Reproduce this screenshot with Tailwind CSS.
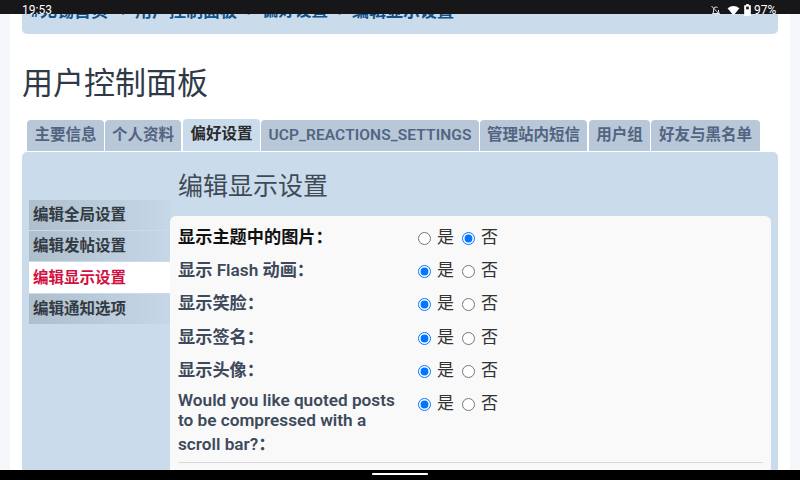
<!DOCTYPE html>
<html lang="zh-CN">
<head>
<meta charset="utf-8">
<script src="https://cdn.jsdelivr.net/npm/@tailwindcss/browser@4"></script>
</head>
<body class="w-[800px] h-[480px] overflow-hidden relative bg-[#f5f7fa] font-['Roboto','Noto_Sans_CJK_SC',sans-serif]">
  <div class="absolute top-0 left-0 right-0 h-[14px] bg-[#17171a] z-10 text-white text-[12px] leading-[14px]">
    <span class="absolute left-[22px] top-[3px]">19:53</span>
    <div class="absolute left-[710px] top-[3px] flex items-center">
      <svg width="12" height="13" viewBox="0 0 24 24" fill="none" stroke="#e5e5e5" stroke-width="2"><path d="M5 18 L7 15 V10 a5 5 0 0 1 8-4 M17 11 V15 L19 18 H5 M10 21 h4 M3 3 L21 22"/></svg>
      <svg width="13" height="11" viewBox="0 0 24 20" fill="#fff" class="ml-[5px]"><path d="M1 6 Q12 -3 23 6 L12 19 Z"/></svg>
      <svg width="7" height="12" viewBox="0 0 10 18" class="ml-[4px]"><path fill="#fff" d="M3 0h4v2h3v16H0V2h3z"/><path fill="#17171a" d="M3 4h4v4H3z"/></svg>
      <span class="ml-[3px]">97%</span>
    </div>
  </div>

  <div class="w-[780px] h-[480px] ml-[10px] bg-white px-[12px]">
    <div class="h-[34px] rounded-b-[5px] bg-[#cadcec] pl-[8px] pt-[1px] flex text-[#105289] text-[17px] font-bold leading-[20px] whitespace-nowrap">
      <span class="w-[82px]">#无锡首页</span><span class="w-[23px] text-center text-[#5b7a99] text-[14px]">›</span><span class="w-[101px]">用户控制面板</span><span class="w-[26px] text-center text-[#5b7a99] text-[14px]">›</span><span class="w-[66px] text-[16.5px]">偏好设置</span><span class="w-[24px] text-center text-[#5b7a99] text-[14px]">›</span><span>编辑显示设置</span>
    </div>

    <h1 class="mt-[32px] text-[31px] leading-[36px] font-normal text-[#303a46]">用户控制面板</h1>

    <div class="mt-[18px] h-[32px] pl-[5px] flex gap-[1px] text-[15.5px] font-semibold text-[#536482] whitespace-nowrap">
      <span class="w-[77px] h-[31px] text-center leading-[31px] rounded-t-[4px] bg-[#b8c8d8]">主要信息</span>
      <span class="w-[76px] h-[31px] text-center leading-[31px] rounded-t-[4px] bg-[#b8c8d8]">个人资料</span>
      <span class="ml-[1px] w-[77px] h-[32px] -mt-[1px] text-center leading-[31px] rounded-t-[4px] bg-[#cadcec] text-[#2a2a2a]">偏好设置</span>
      <span class="w-[218px] h-[31px] text-center leading-[31px] tracking-[0.1px] rounded-t-[4px] bg-[#b8c8d8]">UCP_REACTIONS_SETTINGS</span>
      <span class="w-[107px] h-[31px] text-center leading-[31px] rounded-t-[4px] bg-[#b8c8d8]">管理站内短信</span>
      <span class="ml-[1px] w-[61px] h-[31px] text-center leading-[31px] rounded-t-[4px] bg-[#b8c8d8]">用户组</span>
      <span class="w-[109px] h-[31px] text-center leading-[31px] rounded-t-[4px] bg-[#b8c8d8]">好友与黑名单</span>
    </div>

    <div class="h-[330px] rounded-t-[5px] bg-[#cadcec] flex pl-[7px] pr-[7px] overflow-hidden">
      <div class="w-[141px] pt-[48px] flex flex-col text-[15.5px] font-semibold text-[#333a42]">
        <span class="h-[30px] mb-[1px] pl-[4px] leading-[31px] bg-gradient-to-r from-[#aebecd] to-[#c6d7e7]">编辑全局设置</span>
        <span class="h-[30px] mb-[1px] pl-[4px] leading-[31px] bg-gradient-to-r from-[#aebecd] to-[#c6d7e7]">编辑发帖设置</span>
        <span class="h-[31px] mb-[1px] pl-[4px] leading-[32px] bg-white text-[#d31141]">编辑显示设置</span>
        <span class="h-[30px] pl-[4px] leading-[30px] bg-gradient-to-r from-[#aebecd] to-[#c6d7e7]">编辑通知选项</span>
      </div>
      <div class="flex-1 flex flex-col">
        <h2 class="pl-[8px] pt-[18px] h-[64px] text-[25px] leading-[34px] font-normal text-[#3f4a56]">编辑显示设置</h2>
        <div class="flex-1 rounded-t-[6px] bg-[#f9f9f9] pt-[10.5px] px-[8px] text-[17.2px] leading-[20px] font-semibold text-[#3e4a5c]">
          <div class="h-[33.4px] flex text-[#111]"><span class="w-[239.5px]">显示主题中的图片：</span><div class="font-normal text-[#333] flex items-start">
            <input type="radio" name="r1" class="mt-[5px]"><span class="ml-[6.5px] w-[17px] text-[17px]">是</span>
            <input type="radio" name="r1" checked class="ml-[7.5px] mt-[5px]"><span class="ml-[6.5px] text-[17px]">否</span></div></div>
          <div class="h-[33.4px] flex"><span class="w-[239.5px]">显示 Flash 动画：</span><div class="font-normal text-[#333] flex items-start">
            <input type="radio" name="r2" checked class="mt-[5px]"><span class="ml-[6.5px] w-[17px] text-[17px]">是</span>
            <input type="radio" name="r2" class="ml-[7.5px] mt-[5px]"><span class="ml-[6.5px] text-[17px]">否</span></div></div>
          <div class="h-[33.4px] flex"><span class="w-[239.5px]">显示笑脸：</span><div class="font-normal text-[#333] flex items-start">
            <input type="radio" name="r3" checked class="mt-[5px]"><span class="ml-[6.5px] w-[17px] text-[17px]">是</span>
            <input type="radio" name="r3" class="ml-[7.5px] mt-[5px]"><span class="ml-[6.5px] text-[17px]">否</span></div></div>
          <div class="h-[33.4px] flex"><span class="w-[239.5px]">显示签名：</span><div class="font-normal text-[#333] flex items-start">
            <input type="radio" name="r4" checked class="mt-[5px]"><span class="ml-[6.5px] w-[17px] text-[17px]">是</span>
            <input type="radio" name="r4" class="ml-[7.5px] mt-[5px]"><span class="ml-[6.5px] text-[17px]">否</span></div></div>
          <div class="h-[33.4px] flex"><span class="w-[239.5px]">显示头像：</span><div class="font-normal text-[#333] flex items-start">
            <input type="radio" name="r5" checked class="mt-[5px]"><span class="ml-[6.5px] w-[17px] text-[17px]">是</span>
            <input type="radio" name="r5" class="ml-[7.5px] mt-[5px]"><span class="ml-[6.5px] text-[17px]">否</span></div></div>
          <div class="h-[68.5px] flex"><span class="w-[239.5px] -mt-[3px]"><span class="block">Would you like quoted posts</span><span class="block">to be compressed with a</span><span class="block mt-[4px]">scroll bar?：</span></span><div class="font-normal text-[#333] flex items-start">
            <input type="radio" name="r6" checked class="mt-[5px]"><span class="ml-[6.5px] w-[17px] text-[17px]">是</span>
            <input type="radio" name="r6" class="ml-[7.5px] mt-[5px]"><span class="ml-[6.5px] text-[17px]">否</span></div></div>
          <div class="border-t border-[#d8d8d8]"></div>
        </div>
      </div>
    </div>
  </div>

  <div class="absolute bottom-0 left-0 right-0 h-[10px] bg-black z-10">
    <div class="absolute left-[372px] top-[3px] w-[56px] h-[2px] rounded-full bg-white"></div>
  </div>
</body>
</html>
